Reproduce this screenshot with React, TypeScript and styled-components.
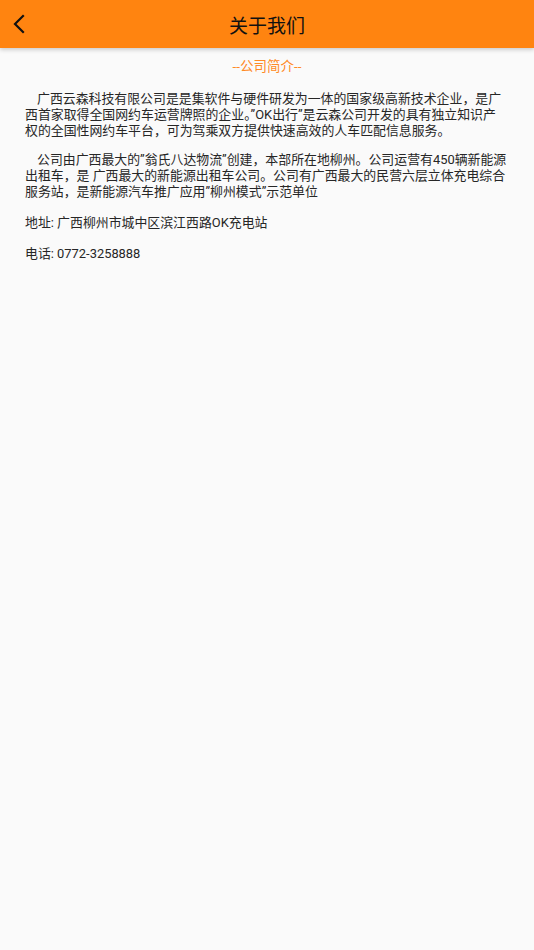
import React from "react";
import styled, { createGlobalStyle } from "styled-components";

const Global = createGlobalStyle`
  html, body { margin: 0; padding: 0; background: #fafafa; }
  body { font-family: Roboto, "Noto Sans CJK SC", sans-serif; }
`;

const Page = styled.div`
  min-height: 950px;
  background: #fafafa;
  display: flex;
  flex-direction: column;
`;

const Header = styled.header`
  height: 48px;
  background: #ff8410;
  display: flex;
  align-items: center;
  justify-content: center;
  position: relative;
  box-shadow: 0 2px 4px rgba(0, 0, 0, 0.18);
`;

const BackButton = styled.button`
  position: absolute;
  left: 4px;
  top: 8px;
  width: 32px;
  height: 32px;
  border: none;
  background: transparent;
  padding: 0;
  display: flex;
  align-items: center;
  justify-content: center;
`;

const Title = styled.h1`
  margin: 0;
  font-size: 19px;
  font-weight: 400;
  color: #111;
  font-family: Roboto, "Noto Sans CJK SC", sans-serif;
`;

const Content = styled.main`
  padding: 9px 25px 0 25px;
  display: flex;
  flex-direction: column;
`;

const SubTitle = styled.div`
  text-align: center;
  color: #ff8a26;
  font-size: 13.5px;
  line-height: 18px;
  font-family: Roboto, "Noto Sans CJK SC", sans-serif;
`;

const Para = styled.p<{ $indent?: boolean }>`
  margin: 0;
  font-size: 12.9px;
  line-height: 16px;
  color: #262626;
  white-space: nowrap;
  text-indent: ${({ $indent }) => ($indent ? "12px" : "0")};
  font-family: Roboto, "Noto Sans CJK SC", sans-serif;
`;

const Gap = styled.div<{ $h: number }>`
  height: ${({ $h }) => $h}px;
`;

export default function App() {
  return (
    <Page>
      <Global />
      <Header>
        <BackButton aria-label="back">
          <svg width="14" height="20" viewBox="0 0 14 20">
            <path d="M10 2 L2 10 L10 18" fill="none" stroke="#111" strokeWidth="2.2" strokeLinecap="square" />
          </svg>
        </BackButton>
        <Title>关于我们</Title>
      </Header>
      <Content>
        <SubTitle>--公司简介--</SubTitle>
        <Gap $h={16} />
        <Para $indent>
          广西云森科技有限公司是是集软件与硬件研发为一体的国家级高新技术企业，是广
          <br />
          西首家取得全国网约车运营牌照的企业。”OK出行”是云森公司开发的具有独立知识产
          <br />
          权的全国性网约车平台，可为驾乘双方提供快速高效的人车匹配信息服务。
        </Para>
        <Gap $h={13} />
        <Para $indent>
          公司由广西最大的”翁氏八达物流”创建，本部所在地柳州。公司运营有450辆新能源
          <br />
          出租车，是 广西最大的新能源出租车公司。公司有广西最大的民营六层立体充电综合
          <br />
          服务站，是新能源汽车推广应用”柳州模式”示范单位
        </Para>
        <Gap $h={15} />
        <Para>地址: 广西柳州市城中区滨江西路OK充电站</Para>
        <Gap $h={15} />
        <Para>电话: 0772-3258888</Para>
      </Content>
    </Page>
  );
}
